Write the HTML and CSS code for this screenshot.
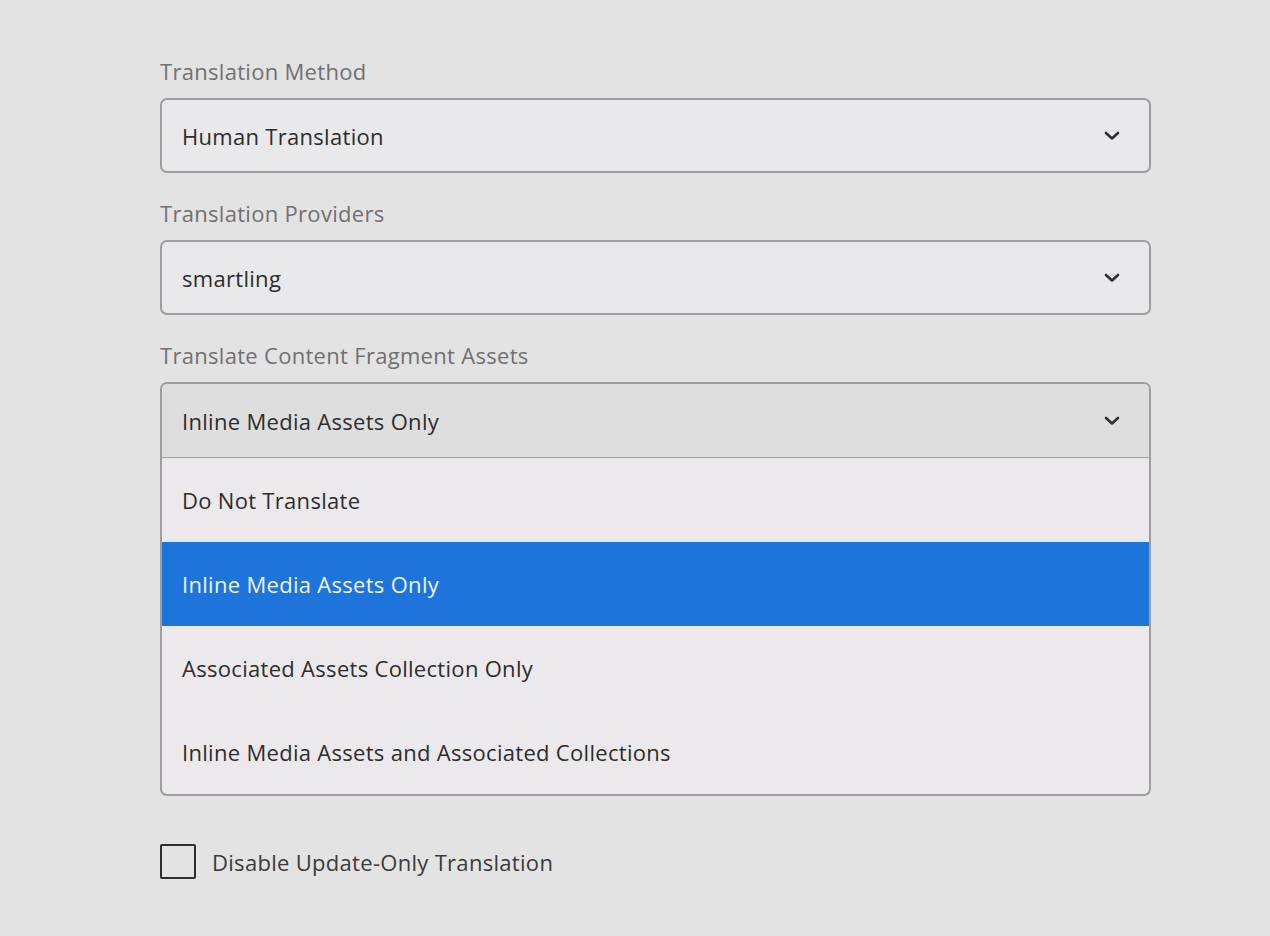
FILE: index.html
```html
<!DOCTYPE html>
<html lang="en">
<head>
<meta charset="utf-8">
<title>Translation settings</title>
<link rel="stylesheet" href="styles.css">
</head>
<body>
<div class="form">
  <div class="group">
    <div class="label">Translation Method</div>
    <div class="field">
      <span class="value">Human Translation</span>
      <svg class="chev" viewBox="0 0 16 10" width="16" height="10"><path d="M2 2 L8 7.5 L14 2" fill="none" stroke="#2f2f2f" stroke-width="2.6" stroke-linecap="round" stroke-linejoin="round"/></svg>
    </div>
  </div>
  <div class="group">
    <div class="label">Translation Providers</div>
    <div class="field">
      <span class="value">smartling</span>
      <svg class="chev" viewBox="0 0 16 10" width="16" height="10"><path d="M2 2 L8 7.5 L14 2" fill="none" stroke="#2f2f2f" stroke-width="2.6" stroke-linecap="round" stroke-linejoin="round"/></svg>
    </div>
  </div>
  <div class="group">
    <div class="label">Translate Content Fragment Assets</div>
    <div class="picker open">
      <div class="field-head">
        <span class="value">Inline Media Assets Only</span>
        <svg class="chev" viewBox="0 0 16 10" width="16" height="10"><path d="M2 2 L8 7.5 L14 2" fill="none" stroke="#2f2f2f" stroke-width="2.6" stroke-linecap="round" stroke-linejoin="round"/></svg>
      </div>
      <ul class="options">
        <li class="option">Do Not Translate</li>
        <li class="option selected">Inline Media Assets Only</li>
        <li class="option">Associated Assets Collection Only</li>
        <li class="option">Inline Media Assets and Associated Collections</li>
      </ul>
    </div>
  </div>
  <label class="check">
    <span class="box"></span>
    <span class="check-label">Disable Update-Only Translation</span>
  </label>
</div>
</body>
</html>
```
FILE: styles.css
```css
html, body {
  margin: 0;
  padding: 0;
  background: #e4e3e4;
  font-family: "Open Sans", "Noto Sans", sans-serif;
}
.form {
  width: 991px;
  padding: 56px 0 0 160px;
  display: flex;
  flex-direction: column;
  letter-spacing: 0.3px;
}
.group {
  display: flex;
  flex-direction: column;
  margin-bottom: 25px;
}
.label {
  font-size: 22px;
  line-height: 30px;
  color: #707070;
  margin-bottom: 12px;
}
.field, .field-head {
  height: 75px;
  box-sizing: border-box;
  border: 2px solid #9f9e9f;
  border-radius: 7px;
  background: #e9e8ea;
  display: flex;
  align-items: center;
  justify-content: space-between;
  padding: 0 29px 0 20px;
}
.value {
  font-size: 22px;
  color: #2d2d2d;
}
.chev {
  display: block;
}
.picker {
  border: 2px solid #9f9e9f;
  border-radius: 7px;
  overflow: hidden;
  background: #ebe9ec;
}
.picker .field-head {
  border: none;
  border-bottom: 1px solid #9f9e9f;
  border-radius: 0;
  background: #dfdedf;
  height: 74px;
  padding-left: 20px;
  padding-right: 29px;
}
.options {
  list-style: none;
  margin: 0;
  padding: 0;
}
.option {
  height: 84px;
  display: flex;
  align-items: center;
  padding-left: 20px;
  font-size: 22px;
  color: #2d2d2d;
}
.option.selected {
  background: #1f74db;
  color: #eef3fb;
}
.check {
  display: flex;
  align-items: center;
  margin-top: 23px;
}
.box {
  width: 36px;
  height: 35px;
  box-sizing: border-box;
  border: 2px solid #2d2d2d;
  border-radius: 2px;
  background: #e4e3e4;
}
.check-label {
  margin-left: 16px;
  font-size: 22px;
  color: #3a3a3a;
}
```
